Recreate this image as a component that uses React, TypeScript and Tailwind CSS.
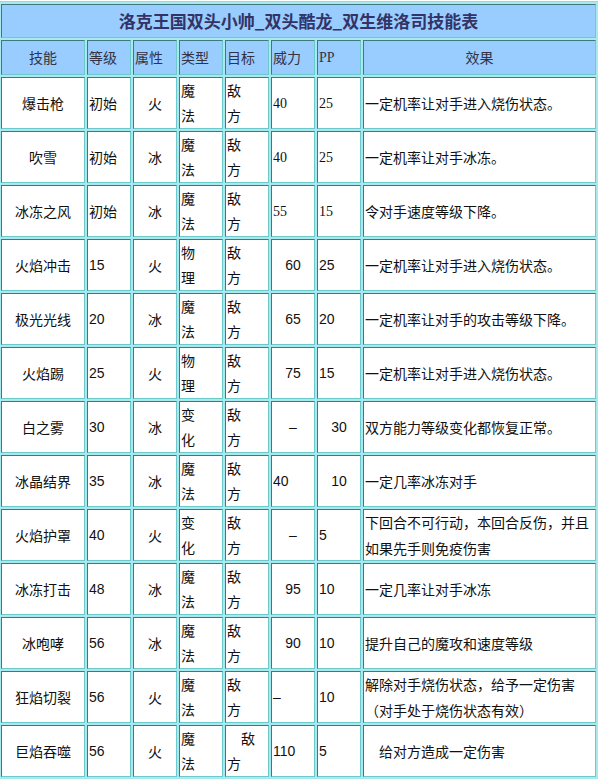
import React from "react";

type Align = "L" | "C";
type Row = {
  name: string;
  level: string;
  attr: string;
  type: [string, string];
  target: [string, string];
  power: string;
  powerAlign: Align;
  pp: string;
  ppAlign: Align;
  serif?: boolean;
  effect: string[];
};

const rows: Row[] = [
  { name: "爆击枪", level: "初始", attr: "火", type: ["魔", "法"], target: ["敌", "方"], power: "40", powerAlign: "L", pp: "25", ppAlign: "L", serif: true, effect: ["一定机率让对手进入烧伤状态。"] },
  { name: "吹雪", level: "初始", attr: "冰", type: ["魔", "法"], target: ["敌", "方"], power: "40", powerAlign: "L", pp: "25", ppAlign: "L", serif: true, effect: ["一定机率让对手冰冻。"] },
  { name: "冰冻之风", level: "初始", attr: "冰", type: ["魔", "法"], target: ["敌", "方"], power: "55", powerAlign: "L", pp: "15", ppAlign: "L", serif: true, effect: ["令对手速度等级下降。"] },
  { name: "火焰冲击", level: "15", attr: "火", type: ["物", "理"], target: ["敌", "方"], power: "60", powerAlign: "C", pp: "25", ppAlign: "L", effect: ["一定机率让对手进入烧伤状态。"] },
  { name: "极光光线", level: "20", attr: "冰", type: ["魔", "法"], target: ["敌", "方"], power: "65", powerAlign: "C", pp: "20", ppAlign: "L", effect: ["一定机率让对手的攻击等级下降。"] },
  { name: "火焰踢", level: "25", attr: "火", type: ["物", "理"], target: ["敌", "方"], power: "75", powerAlign: "C", pp: "15", ppAlign: "L", effect: ["一定机率让对手进入烧伤状态。"] },
  { name: "白之雾", level: "30", attr: "冰", type: ["变", "化"], target: ["敌", "方"], power: "–", powerAlign: "C", pp: "30", ppAlign: "C", effect: ["双方能力等级变化都恢复正常。"] },
  { name: "冰晶结界", level: "35", attr: "冰", type: ["魔", "法"], target: ["敌", "方"], power: "40", powerAlign: "L", pp: "10", ppAlign: "C", effect: ["一定几率冰冻对手"] },
  { name: "火焰护罩", level: "40", attr: "火", type: ["变", "化"], target: ["敌", "方"], power: "–", powerAlign: "C", pp: "5", ppAlign: "L", effect: ["下回合不可行动，本回合反伤，并且", "如果先手则免疫伤害"] },
  { name: "冰冻打击", level: "48", attr: "冰", type: ["魔", "法"], target: ["敌", "方"], power: "95", powerAlign: "C", pp: "10", ppAlign: "L", effect: ["一定几率让对手冰冻"] },
  { name: "冰咆哮", level: "56", attr: "冰", type: ["魔", "法"], target: ["敌", "方"], power: "90", powerAlign: "C", pp: "10", ppAlign: "L", effect: ["提升自己的魔攻和速度等级"] },
  { name: "狂焰切裂", level: "56", attr: "火", type: ["魔", "法"], target: ["敌", "方"], power: "–", powerAlign: "L", pp: "10", ppAlign: "L", effect: ["解除对手烧伤状态，给予一定伤害", "（对手处于烧伤状态有效）"] },
  { name: "巨焰吞噬", level: "56", attr: "火", type: ["魔", "法"], target: ["\u3000敌", "方"], power: "110", powerAlign: "L", pp: "5", ppAlign: "L", effect: ["\u3000给对方造成一定伤害"] },
];

const cellBase =
  "border border-solid border-t-[#3d7a80] border-l-[#3d7a80] border-r-[#6cc9cc] border-b-[#6cc9cc] flex items-center overflow-hidden whitespace-nowrap";
const cjk = "font-['Noto_Sans_CJK_SC',sans-serif] text-[14px]";
const sansNum = "font-['Liberation_Sans',sans-serif] text-[14px]";
const serifNum = "font-['Liberation_Serif',serif] text-[14px]";

function Cell({
  children,
  align = "L",
  className = "",
}: {
  children: React.ReactNode;
  align?: Align;
  className?: string;
}) {
  return (
    <div
      className={`${cellBase} bg-white h-[52px] text-[#111111] ${
        align === "C" ? "justify-center" : "justify-start pl-[1px]"
      } ${className}`}
    >
      {children}
    </div>
  );
}

function Head({ children, align = "L", className = "" }: { children: React.ReactNode; align?: Align; className?: string }) {
  return (
    <div
      className={`${cellBase} bg-[#99ccff] h-[35px] text-[#333344] ${
        align === "C" ? "justify-center" : "justify-start pl-[1px]"
      } ${className}`}
    >
      {children}
    </div>
  );
}

function isNum(s: string) {
  return /^[0-9–]+$/.test(s);
}

export default function App() {
  return (
    <div className="w-[598px] h-[779px] overflow-hidden bg-white">
      <div className="ml-[-2px] mt-[1px] w-max border border-solid border-[#8fdde0] bg-[#a9e8ec] p-[2px]">
        <div className="grid grid-cols-[84px_44px_44px_44px_44px_44px_44px_233px] gap-[2px]">
          <div
            className={`${cellBase} col-span-8 h-[34px] bg-[#99ccff] justify-center font-['Noto_Sans_CJK_SC',sans-serif] text-[17px] font-bold text-[#333366]`}
          >
            洛克王国双头小帅_双头酷龙_双生维洛司技能表
          </div>
          <Head align="C" className={cjk}>技能</Head>
          <Head className={cjk}>等级</Head>
          <Head className={cjk}>属性</Head>
          <Head className={cjk}>类型</Head>
          <Head className={cjk}>目标</Head>
          <Head className={cjk}>威力</Head>
          <Head className={serifNum}>PP</Head>
          <Head align="C" className={cjk}>效果</Head>

          {rows.map((r, i) => (
            <React.Fragment key={i}>
              <Cell align="C" className={cjk}>{r.name}</Cell>
              <Cell className={isNum(r.level) ? sansNum : cjk}>{r.level}</Cell>
              <Cell align="C" className={cjk}>{r.attr}</Cell>
              <Cell className={cjk}>
                <div className="leading-[25px]">
                  <div>{r.type[0]}</div>
                  <div>{r.type[1]}</div>
                </div>
              </Cell>
              <Cell className={cjk}>
                <div className="leading-[25px] whitespace-pre">
                  <div>{r.target[0]}</div>
                  <div>{r.target[1]}</div>
                </div>
              </Cell>
              <Cell align={r.powerAlign} className={r.serif ? serifNum : sansNum}>{r.power}</Cell>
              <Cell align={r.ppAlign} className={r.serif ? serifNum : sansNum}>{r.pp}</Cell>
              <Cell className={cjk}>
                <div className="leading-[26px] whitespace-pre">
                  {r.effect.map((e, j) => (
                    <div key={j}>{e}</div>
                  ))}
                </div>
              </Cell>
            </React.Fragment>
          ))}
        </div>
      </div>
    </div>
  );
}
